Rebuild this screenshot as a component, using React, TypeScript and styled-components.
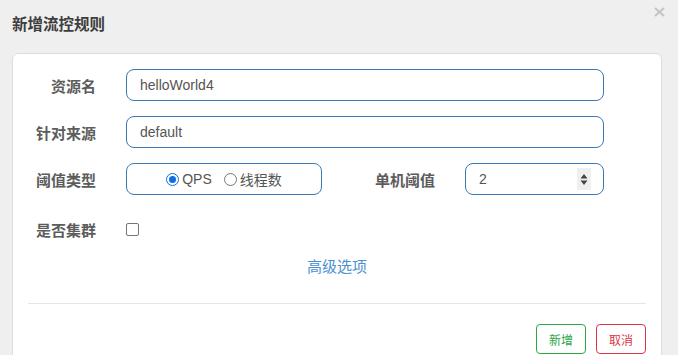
import React from "react";
import styled, { createGlobalStyle } from "styled-components";

const Global = createGlobalStyle`
  html, body { margin: 0; padding: 0; background: #efefef; overflow: hidden; }
  body { font-family: "Liberation Sans", "Noto Sans CJK SC", Arial, sans-serif; }
  * { box-sizing: border-box; }
`;

const Modal = styled.div`
  width: 678px;
  height: 355px;
  background: #efefef;
  padding: 0 16px 0 12px;
  position: relative;
  overflow: hidden;
`;

const Header = styled.div`
  height: 53px;
  display: flex;
  align-items: center;
  padding-bottom: 8px;
`;

const Title = styled.h4`
  margin: 0;
  font-size: 15.5px;
  font-weight: bold;
  color: #3d3d3d;
  font-family: "Noto Sans CJK SC", sans-serif;
`;

const Close = styled.button`
  position: absolute;
  top: 5px;
  right: 12px;
  width: 14px;
  height: 14px;
  padding: 0;
  border: none;
  background: transparent;
  display: flex;
  align-items: center;
  justify-content: center;
`;

const Panel = styled.div`
  width: 650px;
  background: #fff;
  border: 1px solid #dddddd;
  border-radius: 6px;
  padding: 15px 15px 20px 15px;
`;

const Form = styled.div`
  display: flex;
  flex-direction: column;
  gap: 15px;
`;

const Row = styled.div<{ $h?: number }>`
  display: flex;
  align-items: center;
  height: ${(p) => p.$h ?? 32}px;
`;

const Label = styled.label`
  width: 68px;
  text-align: right;
  font-size: 15px;
  font-weight: bold;
  color: #5c5c5c;
  font-family: "Noto Sans CJK SC", sans-serif;
  margin-right: 30px;
  flex-shrink: 0;
`;

const Input = styled.input<{ $w: number }>`
  width: ${(p) => p.$w}px;
  height: 32px;
  border: 1px solid #3a79b4;
  border-radius: 8px;
  padding: 0 12px 0 13px;
  font-size: 14px;
  color: #555;
  font-family: "Liberation Sans", Arial, sans-serif;
  outline: none;
  background: #fff;
`;

const RadioBox = styled.div`
  width: 196px;
  height: 32px;
  border: 1px solid #3a79b4;
  border-radius: 8px;
  display: flex;
  align-items: center;
  justify-content: center;
  gap: 12px;
  font-size: 14px;
  color: #555;
`;

const RadioLabel = styled.label`
  display: flex;
  align-items: center;
  gap: 3px;
  font-family: "Liberation Sans", "Noto Sans CJK SC", Arial, sans-serif;
`;

const RadioCircle = styled.span<{ $on?: boolean }>`
  width: 13px;
  height: 13px;
  border-radius: 50%;
  border: 1px solid ${(p) => (p.$on ? "#0a6fe0" : "#767676")};
  display: flex;
  align-items: center;
  justify-content: center;
  &::after {
    content: "";
    width: 7px;
    height: 7px;
    border-radius: 50%;
    background: ${(p) => (p.$on ? "#0a6fe0" : "transparent")};
  }
`;

const Spacer = styled.div`
  width: 45px;
`;

const NumberWrap = styled.div`
  position: relative;
  width: 139px;
  height: 32px;
`;

const Spinner = styled.span`
  position: absolute;
  right: 13px;
  top: 5px;
  width: 14px;
  height: 22px;
  background: #efefef;
  display: flex;
  align-items: center;
  justify-content: center;
`;

const Checkbox = styled.span`
  width: 13px;
  height: 13px;
  border: 1px solid #767676;
  border-radius: 2px;
  background: #fff;
`;

const LinkRow = styled.div`
  display: flex;
  justify-content: center;
  margin-top: 7px;
  height: 20px;
  align-items: center;
`;

const Link = styled.a`
  font-size: 15px;
  color: #4a8fd1;
  font-family: "Noto Sans CJK SC", sans-serif;
  text-decoration: none;
`;

const Divider = styled.hr`
  margin: 28px 0 20px 0;
  border: none;
  border-top: 1px solid #e5e5e5;
  width: 618px;
`;

const Footer = styled.div`
  display: flex;
  justify-content: flex-end;
  gap: 10px;
  width: 618px;
`;

const Btn = styled.button<{ $c: string }>`
  width: 50px;
  height: 30px;
  border: 1px solid ${(p) => p.$c};
  color: ${(p) => p.$c};
  background: #fff;
  border-radius: 4px;
  font-size: 12px;
  font-family: "Noto Sans CJK SC", sans-serif;
  padding: 0;
`;

export default function App() {
  return (
    <>
      <Global />
      <Modal>
        <Header>
          <Title>新增流控规则</Title>
        </Header>
        <Close aria-label="close">
          <svg width="11" height="10" viewBox="0 0 11 10">
            <path d="M1 1 L10 9 M10 1 L1 9" stroke="#c4c4c4" strokeWidth="2" />
          </svg>
        </Close>
        <Panel>
          <Form>
            <Row>
              <Label>资源名</Label>
              <Input $w={478} defaultValue="helloWorld4" />
            </Row>
            <Row>
              <Label>针对来源</Label>
              <Input $w={478} defaultValue="default" />
            </Row>
            <Row>
              <Label>阈值类型</Label>
              <RadioBox>
                <RadioLabel>
                  <RadioCircle $on />
                  QPS
                </RadioLabel>
                <RadioLabel>
                  <RadioCircle />
                  线程数
                </RadioLabel>
              </RadioBox>
              <Spacer />
              <Label>单机阈值</Label>
              <NumberWrap>
                <Input $w={139} defaultValue="2" />
                <Spinner>
                  <svg width="8" height="13" viewBox="0 0 8 13">
                    <path d="M4 1 L7.5 5.5 L0.5 5.5 Z M0.5 7.5 L7.5 7.5 L4 12 Z" fill="#444" />
                  </svg>
                </Spinner>
              </NumberWrap>
            </Row>
            <Row $h={38}>
              <Label>是否集群</Label>
              <Checkbox />
            </Row>
          </Form>
          <LinkRow>
            <Link>高级选项</Link>
          </LinkRow>
          <Divider />
          <Footer>
            <Btn $c="#28a745">新增</Btn>
            <Btn $c="#dc3545">取消</Btn>
          </Footer>
        </Panel>
      </Modal>
    </>
  );
}
